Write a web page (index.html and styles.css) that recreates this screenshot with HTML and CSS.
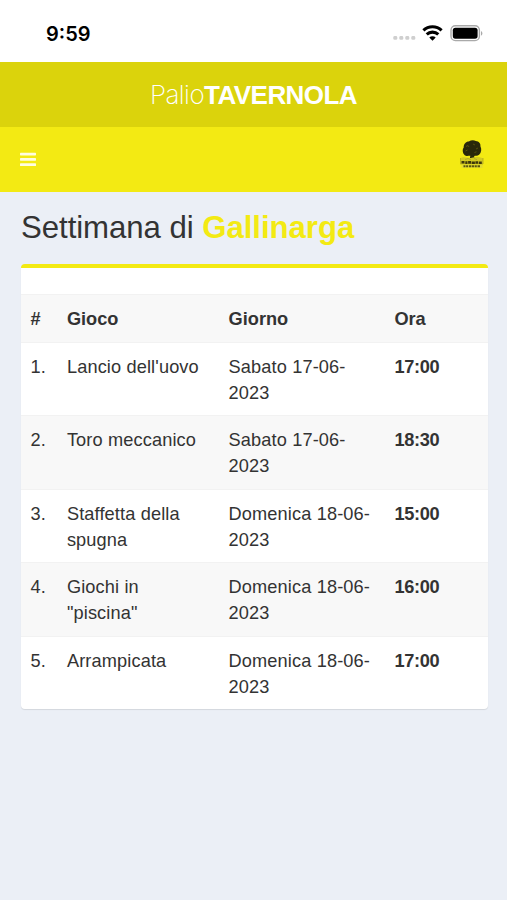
FILE: index.html
```html
<!DOCTYPE html>
<html lang="it">
<head>
<meta charset="UTF-8">
<meta name="viewport" content="width=device-width, initial-scale=1">
<title>Palio Tavernola</title>
<link rel="stylesheet" href="styles.css">
</head>
<body>
<div class="status-bar">
  <span class="clock">9:59</span>
  <div class="status-icons">
    <svg class="signal" width="24" height="6" viewBox="0 0 24 6" fill="#cfcfcf" aria-hidden="true">
      <rect x=".3" y="1" width="4" height="3.8" rx="1.4"/>
      <rect x="6.3" y="1" width="4" height="3.8" rx="1.4"/>
      <rect x="12.3" y="1" width="4" height="3.8" rx="1.4"/>
      <rect x="18.3" y="1" width="4" height="3.8" rx="1.4"/>
    </svg>
    <svg class="wifi" width="21" height="16" viewBox="0 0 20 16" fill="none" stroke="#000" stroke-width="3.1" aria-hidden="true">
      <path d="M.9 5.400a13.200 13.200 0 0 1 18.200 0"/>
      <path d="M4.200 9.400a8.500 8.500 0 0 1 11.600 0"/>
      <path d="M10 15.700l-3.200-3.200a4.600 4.600 0 0 1 6.400 0z" fill="#000" stroke="none"/>
    </svg>
    <svg class="battery" width="34" height="17" viewBox="0 0 34 17" aria-hidden="true">
      <rect x="1" y=".8" width="28.400" height="14.800" rx="4.400" fill="none" stroke="#a9a9a9" stroke-width="1.400"/>
      <rect x="2.800" y="2.700" width="24.800" height="11" rx="2.600"/>
      <path d="M31 6v4.800c1.900-.9 1.900-3.900 0-4.800z" fill="#a9a9a9"/>
    </svg>
  </div>
</div>

<header class="main-header">
  <a class="logo" href="#"><span class="logo-light">Palio</span><b>TAVERNOLA</b></a>
  <nav class="navbar">
    <button class="toggle" aria-label="Apri menu">
      <svg width="16" height="15" viewBox="0 0 16 15" fill="#fffde0" aria-hidden="true">
        <rect y="0.7" width="16" height="2.700" rx=".6"/>
        <rect y="6" width="16" height="2.700" rx=".6"/>
        <rect y="11.300" width="16" height="2.700" rx=".6"/>
      </svg>
    </button>
    <!-- albero della contrada -->
    <svg class="crest" width="26" height="30" viewBox="0 0 26 30" aria-hidden="true">
      <path d="M5.500 15C3.300 12.800 3.200 9.300 4.700 7.500 4.600 4 7 1.500 9.800 1.500 12 0 15.200 0 16.800 1.100c3 .2 5.100 2.500 4.600 5.200 1.500 2.700 1 6.500-1.300 8.500-1.800 1.500-3.500.9-5 1.200l.7 3.500H10.700l.6-3.700C9.500 15.600 7.500 16.700 5.500 15z" fill="#29270a"/>
      <path d="M7 6.500l2-1 1 1.500M14 4l2 1M17 9l2-1M6.500 11l2-1M15.500 12.500l2-.7" stroke="#5a550a" stroke-width=".9" fill="none"/>
      <path d="M1.500 18.200c3.500-1.700 5-.3 7-.5s3 .8 5.500-.2 6-.8 10 .7v6H1.500z" fill="#d3ca22"/>
      <path d="M1.500 18v6h22.500v-6M6 19.500l3-1 3 1.200M15 18.500l3 1.200" fill="none" stroke="#aaa21c" stroke-width=".7"/>
      <path d="M2.500 22.300h3m.8.300h2.200m.6-.2h3m.6.300h3.200m.5-.2h2.700m.7.200h3" stroke="#3c370b" stroke-width="2.600"/>
      <path d="M2.500 24.500h21v3.500h-21z" fill="#e3dc31"/>
      <path d="M4.500 26.200h2m.6 0h2m.8 0h2.500m.6 0h2m.6 0h2.200m.7 0h2.500" stroke="#5c560e" stroke-width="2"/>
    </svg>
  </nav>
</header>

<main class="content">
  <h1>Settimana di <b>Gallinarga</b></h1>
  <div class="box">
    <table class="games">
      <thead>
        <tr><th class="col-num">#</th><th class="col-game">Gioco</th><th class="col-day">Giorno</th><th>Ora</th></tr>
      </thead>
      <tbody>
        <tr><td>1.</td><td>Lancio dell'uovo</td><td>Sabato 17-06-2023</td><td><b>17:00</b></td></tr>
        <tr><td>2.</td><td>Toro meccanico</td><td>Sabato 17-06-2023</td><td><b>18:30</b></td></tr>
        <tr><td>3.</td><td>Staffetta della spugna</td><td>Domenica 18-06-2023</td><td><b>15:00</b></td></tr>
        <tr><td>4.</td><td>Giochi in "piscina"</td><td>Domenica 18-06-2023</td><td><b>16:00</b></td></tr>
        <tr><td>5.</td><td>Arrampicata</td><td>Domenica 18-06-2023</td><td><b>17:00</b></td></tr>
      </tbody>
    </table>
  </div>
</main>
</body>
</html>
```
FILE: styles.css
```css
* {
  box-sizing: border-box;
}
body {
  margin: 0;
  min-height: 100vh;
  font-family: "Liberation Sans", Arial, sans-serif;
  font-size: 18.2px;
  line-height: 26px;
  color: #333;
  background: #ebeff6;
}

/* Status bar */
.status-bar {
  display: flex;
  align-items: center;
  justify-content: space-between;
  height: 62px;
  padding: 4px 23px 0 46px;
  background: #fff;
}
.clock {
  padding-top: 1px;
  font-family: Inter, sans-serif;
  font-size: 20px;
  font-weight: 600;
  color: #000;
}
.status-icons {
  display: flex;
  align-items: center;
}
.signal {
  margin: 10px 5px 0 0;
}
.wifi {
  margin-right: 7px;
}

/* Header */
.logo {
  display: flex;
  align-items: center;
  justify-content: center;
  height: 65px;
  background: #dbd30c;
  color: #fff;
  font-size: 26px;
  letter-spacing: -0.55px;
  text-decoration: none;
}
.logo-light {
  font-family: Inter, sans-serif;
  font-weight: 200;
}
.navbar {
  display: flex;
  align-items: center;
  justify-content: space-between;
  height: 65px;
  padding: 0 22px 0 20px;
  background: #f3ea13;
}
.toggle {
  display: flex;
  padding: 0;
  border: 0;
  background: none;
}
.crest {
  margin-bottom: 10px;
}

/* Content */
.content {
  padding: 20px 19.5px 0 21px;
}
h1 {
  margin: 0 0 20px;
  font-size: 31.2px;
  line-height: 32px;
  font-weight: 400;
  letter-spacing: -0.06px;
}
h1 b {
  color: #f3ea13;
}
.box {
  padding-top: 26px;
  background: #fff;
  border-top: 4px solid #f3ea13;
  border-radius: 4px;
  box-shadow: 0 1px 1px rgba(0,0,0,0.1);
  overflow: hidden;
}
.games {
  width: 100%;
  border-collapse: separate;
  border-spacing: 0;
  table-layout: fixed;
}
.games th,
.games td {
  padding: 11px 10.4px 9.5px;
  border-top: 1px solid #f2f2f2;
  text-align: left;
  vertical-align: top;
}
.games td {
  letter-spacing: 0.13px;
}
.games td b {
  letter-spacing: -0.3px;
}
.games th:first-child,
.games td:first-child {
  padding-left: 9.4px;
}
.games thead tr,
.games tbody tr:nth-child(even) {
  background: #f8f8f8;
}
.col-num {
  width: 35.5px;
}
.col-game {
  width: 161.7px;
}
.col-day {
  width: 165.8px;
}
```
